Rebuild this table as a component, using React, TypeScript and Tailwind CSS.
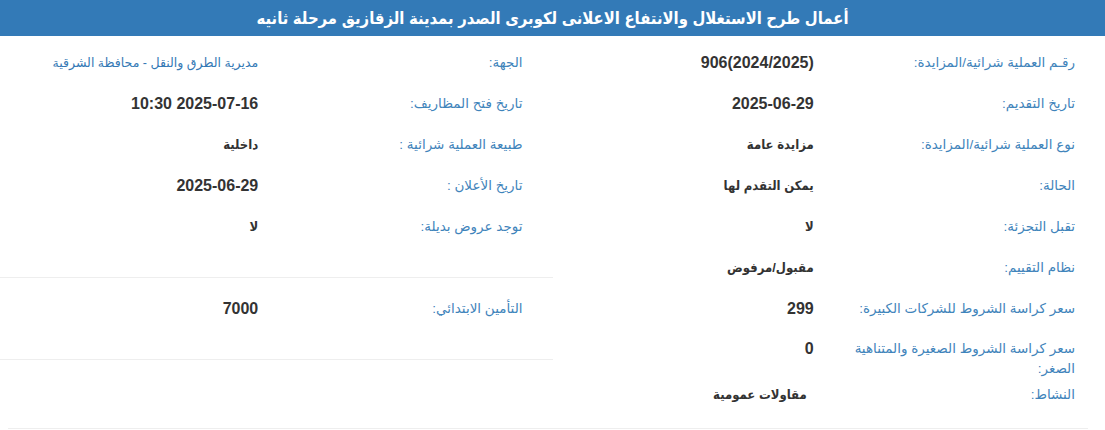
const TITLE = "أعمال طرح الاستغلال والانتفاع الاعلانى لكوبرى الصدر بمدينة الزقازيق مرحلة ثانيه";

type Field = { label: React.ReactNode; value: React.ReactNode; kind?: "num" | "ar" | "link" };

const RIGHT_FIELDS: Field[] = [
  { label: "رقـم العملية شرائية/المزايدة:", value: <span dir="ltr">906(2024/2025)</span> },
  { label: "تاريخ التقديم:", value: "2025-06-29" },
  { label: "نوع العملية شرائية/المزايدة:", value: "مزايدة عامة", kind: "ar" },
  { label: "الحالة:", value: "يمكن التقدم لها", kind: "ar" },
  { label: "تقبل التجزئة:", value: "لا", kind: "ar" },
  { label: "نظام التقييم:", value: "مقبول/مرفوض", kind: "ar" },
  { label: "سعر كراسة الشروط للشركات الكبيرة:", value: "299" },
];

const LEFT_FIELDS: Field[] = [
  { label: "الجهة:", value: "مديرية الطرق والنقل - محافظة الشرقية", kind: "link" },
  { label: "تاريخ فتح المظاريف:", value: "2025-07-16 10:30" },
  { label: "طبيعة العملية شرائية :", value: "داخلية", kind: "ar" },
  { label: "تاريخ الأعلان :", value: "2025-06-29" },
  { label: "توجد عروض بديلة:", value: "لا", kind: "ar" },
];

function valueClass(kind?: Field["kind"]) {
  if (kind === "link") return "text-[12.5px] text-[#3479b5] font-['Liberation_Sans','DejaVu_Sans',sans-serif]";
  if (kind === "ar") return "text-[13px] font-bold text-[#333] font-['Liberation_Sans','DejaVu_Sans_Condensed',sans-serif]";
  return "text-[16px] font-bold text-[#333]";
}

function Row({ f, valuePad = "pr-[15px]" }: { f: Field; valuePad?: string }) {
  return (
    <div className="flex h-[41px] items-center">
      <div className="w-1/2 pr-[30px] text-[13.5px] leading-5 text-[#3f84bb]">{f.label}</div>
      <div className={`w-1/2 ${valuePad} whitespace-nowrap leading-5 ${valueClass(f.kind)}`}>{f.value}</div>
    </div>
  );
}

export default function App() {
  return (
    <div dir="rtl" className="min-h-[430px] bg-white font-['Liberation_Sans','DejaVu_Sans',sans-serif]">
      {/* Header */}
      <div className="flex h-9 items-center justify-center bg-[#337ab7] font-['Liberation_Sans','DejaVu_Sans_Condensed',sans-serif] text-[16.5px] font-bold text-white">
        {TITLE}
      </div>

      <div className="flex pt-[6px]">
        {/* right column */}
        <div className="w-1/2">
          {RIGHT_FIELDS.map((f, i) => (
            <Row key={i} f={f} />
          ))}
          <div className="flex h-[45px] items-start pt-[10px]">
            <div className="w-1/2 whitespace-nowrap pr-[30px] text-[13.5px] leading-5 text-[#3f84bb]">
              سعر كراسة الشروط الصغيرة والمتناهية
              <br />
              الصغر:
            </div>
            <div className="w-1/2 pr-[15px] text-[16px] leading-5 font-bold text-[#333]">0</div>
          </div>
          <Row f={{ label: "النشاط:", value: "مقاولات عمومية", kind: "ar" }} valuePad="pr-[22px]" />
        </div>

        {/* left column */}
        <div className="w-1/2">
          {LEFT_FIELDS.map((f, i) => (
            <Row key={i} f={f} valuePad="pr-[18px]" />
          ))}
          <div className="mt-[30px] border-t border-[#eee]" />
          <div className="mt-[10px]">
            <Row f={{ label: "التأمين الابتدائي:", value: "7000" }} valuePad="pr-[18px]" />
          </div>
          <div className="mt-[30px] border-t border-[#eee]" />
        </div>
      </div>

      <div className="mr-[17px] ml-[8px] mt-[13px] border-t border-[#eee]" />
    </div>
  );
}
